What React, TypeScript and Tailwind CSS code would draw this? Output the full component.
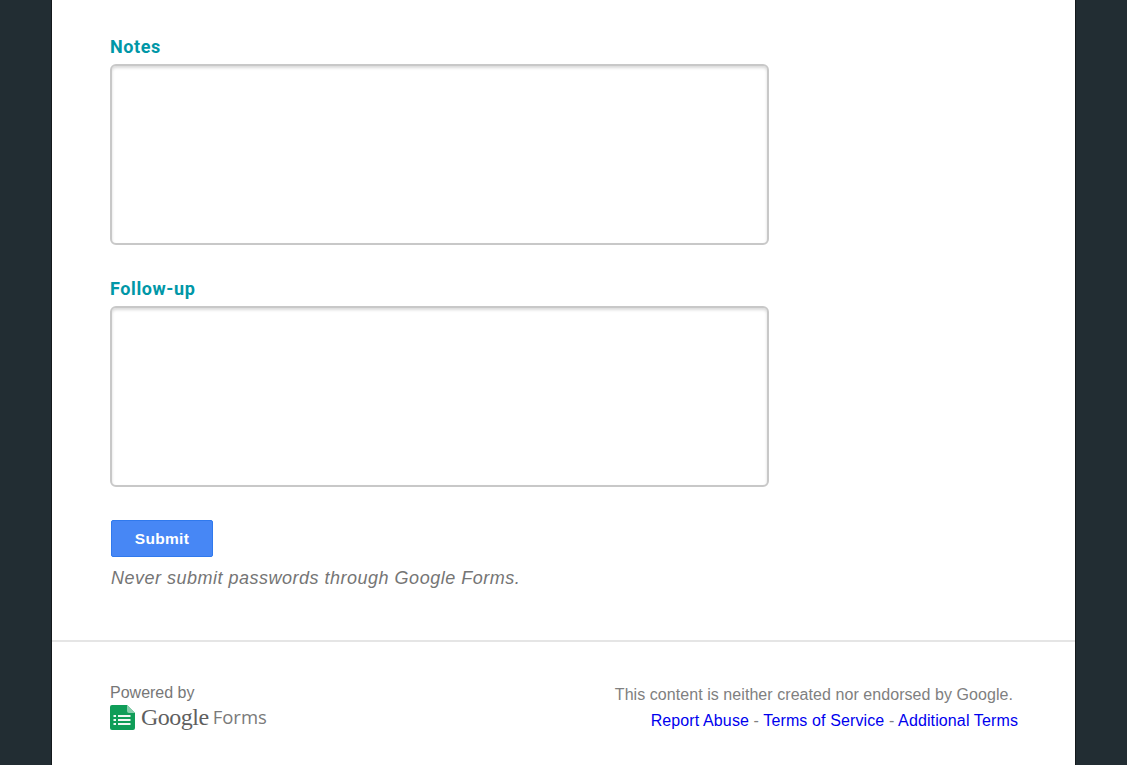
function FormsIcon() {
  return (
    <svg width="25" height="25" viewBox="0 0 25 25" aria-hidden="true">
      <path d="M2 0h15l8 8v15a2 2 0 0 1-2 2H2a2 2 0 0 1-2-2V2a2 2 0 0 1 2-2z" fill="#0f9d58" />
      <path d="M17 0l8 8h-6a2 2 0 0 1-2-2z" fill="#87ceac" />
      <g fill="#f1f8f4">
        <rect x="3.5" y="10" width="2.5" height="2" />
        <rect x="3.5" y="14" width="2.5" height="2" />
        <rect x="3.5" y="18" width="2.5" height="2" />
        <rect x="8" y="10" width="12.5" height="2" />
        <rect x="8" y="14" width="12.5" height="2" />
        <rect x="8" y="18" width="12.5" height="2" />
      </g>
    </svg>
  );
}

function Field({ label }: { label: string }) {
  return (
    <div className="flex flex-col">
      <label className="pt-[1px] font-['Roboto',sans-serif] text-[18px] leading-[20px] font-bold tracking-[0.6px] text-[#0097a7]">
        {label}
      </label>
      <textarea className="mt-[7px] h-[181px] w-[659px] resize-none rounded-[6px] border-2 border-[#c8c8c8] bg-white shadow-[inset_0_2px_3px_rgba(0,0,0,0.15)] outline-none" />
    </div>
  );
}

export default function App() {
  return (
    <div className="flex h-[765px] w-full overflow-hidden bg-[#222d33] font-['Liberation_Sans',Arial,sans-serif]">
      <div className="w-[51px] shrink-0" />
      <main className="flex w-[1025px] shrink-0 flex-col border-x border-[#14191c] bg-white">
        <div className="flex h-[642px] flex-col border-b-2 border-[#e5e5e5] pl-[58px] pt-[36px]">
          <div className="flex flex-col gap-[33px]">
            <Field label="Notes" />
            <Field label="Follow-up" />
          </div>
          <button
            type="button"
            className="ml-[1px] mt-[33px] h-[37px] w-[102px] rounded-[2px] border border-[#3079ed] bg-[#4787f5] text-[15.5px] font-bold tracking-[0.3px] text-white"
          >
            Submit
          </button>
          <p className="ml-[1px] mt-[11px] text-[18px] leading-[20px] tracking-[0.5px] italic text-[#757575]">
            Never submit passwords through Google Forms.
          </p>
        </div>
        <footer className="flex flex-1 items-start justify-between pl-[58px] pr-[57px] pt-[41px]">
          <div className="flex flex-col">
            <span className="pt-[1px] text-[16px] leading-[17px] text-[#777777]">Powered by</span>
            <div className="mt-[1px] flex items-center">
              <FormsIcon />
              <span className="ml-[6px] font-['Liberation_Serif',serif] text-[24px] leading-[30px] tracking-[-0.5px] text-[#5f5f5f]">
                Google
              </span>
              <span className="ml-[4px] font-['Open_Sans',sans-serif] text-[18.5px] leading-[28px] text-[#7a7a7a]">
                Forms
              </span>
            </div>
          </div>
          <div className="flex flex-col items-end pt-[2px] text-[16px]">
            <span className="mr-[5px] leading-[20px] tracking-[0.06px] text-[#808080]">
              This content is neither created nor endorsed by Google.
            </span>
            <div className="mt-[6px] leading-[20px] tracking-[0.12px] text-[#808080]">
              <a href="#abuse" className="text-[#0000ee]">Report Abuse</a>
              {" - "}
              <a href="#terms" className="text-[#0000ee]">Terms of Service</a>
              {" - "}
              <a href="#additional" className="text-[#0000ee]">Additional Terms</a>
            </div>
          </div>
        </footer>
      </main>
      <div className="flex-1" />
    </div>
  );
}
